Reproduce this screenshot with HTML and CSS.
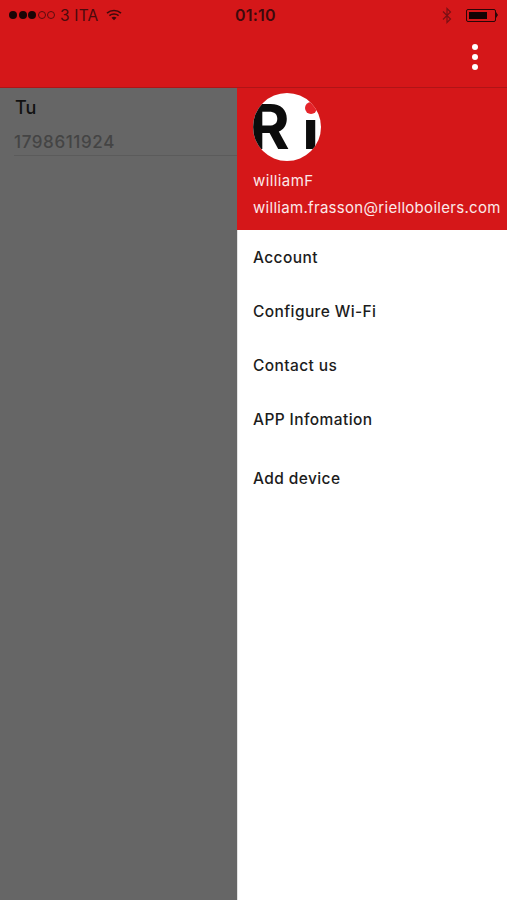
FILE: index.html
```html
<!DOCTYPE html>
<html lang="en">
	<head>
		<meta charset="UTF-8" />
		<meta name="viewport" content="width=device-width, initial-scale=1.0" />
		<title>Menu</title>
		<link rel="stylesheet" href="styles.css">
	</head>
	<body>
		<header class="topbar">
			<div class="status-bar">
				<div class="status-left">
					<div class="signal">
						<span class="dot"></span>
						<span class="dot"></span>
						<span class="dot"></span>
						<span class="dot empty"></span>
						<span class="dot empty"></span>
					</div>
					<span class="carrier">3 ITA</span>
					<svg class="wifi" width="16" height="12" viewBox="0 0 16 12">
						<path d="M1 4.2C5 .6 11 .6 15 4.2" fill="none" stroke="#3d0a0c" stroke-width="1.6" />
						<path d="M3.4 6.6C6 4.4 10 4.4 12.6 6.6" fill="none" stroke="#3d0a0c" stroke-width="1.6" />
						<path d="M5.5 8.7L8 11.3L10.5 8.7C9 7.5 7 7.5 5.5 8.7Z" fill="#3d0a0c" />
					</svg>
				</div>
				<span class="clock">01:10</span>
				<div class="status-right">
					<svg class="bluetooth" width="10" height="17" viewBox="0 0 10 17">
						<path d="M1 4.5L8.5 12L5 15.5V1.5L8.5 5L1 12.5" fill="none" stroke="#7a1014" stroke-width="1.2" />
					</svg>
					<div class="battery">
						<div class="battery-level"></div>
					</div>
					<span class="battery-tip"></span>
				</div>
			</div>
			<div class="action-row">
				<div class="more-btn">
					<span></span>
					<span></span>
					<span></span>
				</div>
			</div>
		</header>

		<main class="content">
			<section class="device-list">
				<div class="device">
					<div class="device-name">Tu</div>
					<div class="device-code">1798611924</div>
				</div>
			</section>

			<nav class="drawer">
				<div class="drawer-head">
					<div class="avatar">
						<span class="avatar-r">R</span>
						<span class="avatar-i">ı</span>
						<span class="avatar-dot"></span>
					</div>
					<div class="user-name">williamF</div>
					<div class="user-mail">william.frasson@rielloboilers.com</div>
				</div>
				<ul class="menu">
					<li>Account</li>
					<li>Configure Wi-Fi</li>
					<li>Contact us</li>
					<li>APP Infomation</li>
					<li class="add-device">Add device</li>
				</ul>
			</nav>
		</main>
	</body>
</html>
```

FILE: styles.css
```css
* {
	box-sizing: border-box;
}

body {
	margin: 0;
	height: 900px;
	display: flex;
	flex-direction: column;
	overflow: hidden;
	font-family: Inter, "Liberation Sans", sans-serif;
	background-color: #666666;
}

.topbar {
	height: 88px;
	background-color: #d51719;
	border-bottom: 1px solid #b01416;
}

.status-bar {
	height: 30px;
	display: flex;
	align-items: center;
	justify-content: space-between;
	position: relative;
	padding: 0 9px 0 9px;
	color: #4a0a0d;
	font-size: 15.5px;
}

.status-left {
	display: flex;
	align-items: center;
}

.signal {
	display: flex;
	gap: 1.5px;
	margin-right: 5px;
}

.dot {
	width: 8px;
	height: 8px;
	border-radius: 50%;
	background-color: #1a0506;
}

.dot.empty {
	background-color: transparent;
	border: 1px solid #5a0c0f;
}

.carrier {
	letter-spacing: 0.2px;
	margin-right: 8px;
}

.clock {
	position: absolute;
	left: 235px;
	top: 5px;
	font-size: 16px;
	font-weight: 600;
	color: #3d0a0c;
	letter-spacing: 0.2px;
}

.status-right {
	display: flex;
	align-items: center;
}

.bluetooth {
	margin-right: 14px;
}

.battery {
	width: 30px;
	height: 13px;
	padding: 2px;
	border: 1px solid #2a0608;
	border-radius: 2px;
}

.battery-level {
	width: 18px;
	height: 100%;
	background-color: #140304;
}

.battery-tip {
	width: 0;
	height: 0;
	border-left: 2px solid #2a0608;
	border-top: 3px solid transparent;
	border-bottom: 3px solid transparent;
}

.action-row {
	display: flex;
	justify-content: flex-end;
	padding: 14px 29px 0 0;
}

.more-btn {
	display: flex;
	flex-direction: column;
	gap: 4px;
}

.more-btn span {
	width: 6px;
	height: 6px;
	border-radius: 50%;
	background-color: #ffffff;
}

.content {
	flex: 1;
	display: flex;
}

.device-list {
	width: 237px;
	padding-left: 14px;
}

.device {
	padding-top: 9px;
	height: 68px;
	border-bottom: 1px solid #5b5b5b;
}

.device-name {
	font-size: 18px;
	font-weight: 500;
	line-height: 22px;
	margin-left: 1px;
	color: #111111;
}

.device-code {
	margin-top: 12px;
	font-size: 17px;
	font-weight: 500;
	line-height: 22px;
	letter-spacing: 0.6px;
	color: #444444;
}

.drawer {
	width: 270px;
	background-color: #ffffff;
	border-left: 1px solid #e2e2e2;
}

.drawer-head {
	height: 142px;
	margin-left: -1px;
	padding: 5px 0 0 16px;
	background-color: #d51719;
	color: #fbe9e9;
	font-size: 15px;
}

.avatar {
	width: 68px;
	height: 68px;
	border-radius: 50%;
	background-color: #ffffff;
	overflow: hidden;
	position: relative;
}

.avatar-r,
.avatar-i {
	position: absolute;
	color: #0c0c0c;
	line-height: 68px;
}

.avatar-r {
	left: -4px;
	top: 0;
	font-size: 62px;
	font-weight: 700;
}

.avatar-i {
	left: 50px;
	top: 3px;
	font-size: 54px;
	font-weight: 800;
}

.avatar-dot {
	position: absolute;
	top: 9px;
	left: 52px;
	width: 12px;
	height: 12px;
	border-radius: 50%;
	background-color: #e5242a;
}

.user-name {
	margin-top: 11px;
	line-height: 18px;
	letter-spacing: 0.4px;
}

.user-mail {
	margin-top: 9px;
	line-height: 18px;
	letter-spacing: 0.3px;
	white-space: nowrap;
}

.menu {
	list-style: none;
	margin: 0;
	padding: 1px 0 0 15px;
	font-size: 15.5px;
	font-weight: 500;
	letter-spacing: 0.4px;
	color: #1c1c1c;
}

.menu li {
	height: 54px;
	line-height: 54px;
}

.menu .add-device {
	margin-top: 5px;
}
```
